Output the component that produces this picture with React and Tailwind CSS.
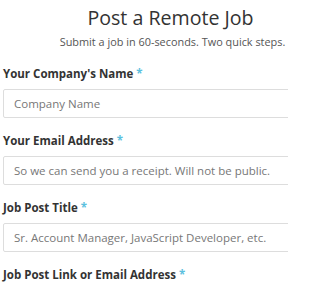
import React from 'react'

const fields = [
    { label: "Your Company's Name", placeholder: 'Company Name' },
    { label: 'Your Email Address', placeholder: 'So we can send you a receipt. Will not be public.' },
    { label: 'Job Post Title', placeholder: 'Sr. Account Manager, JavaScript Developer, etc.' },
    { label: 'Job Post Link or Email Address', placeholder: '' },
];

const App = () => {
    return (
        <div className="w-[288px] h-[288px] overflow-hidden bg-white" style={{ fontFamily: '"Open Sans", sans-serif' }}>
            <div className="w-[338px] pl-[3px]">
                <div className="text-center pt-[4px]">
                    <h1 className="text-[19.6px] leading-[28px] text-[#333] font-normal">Post a Remote Job</h1>
                    <p className="text-[10.9px] leading-[16px] text-[#555] mt-[2px] pl-[4px]">Submit a job in 60-seconds. Two quick steps.</p>
                </div>
                <form className="mt-[16px]">
                    {fields.map(field => (
                        <div key={field.label} className="mb-[15px]">
                            <label className="block text-[11.5px] leading-[16px] font-bold text-[#333] mb-[7px]">
                                {field.label} <span className="text-[#5bc0de]">*</span>
                            </label>
                            <input
                                type="text"
                                placeholder={field.placeholder}
                                className="block w-full h-[29px] border border-[#ddd] rounded-[2px] px-[10px] text-[11.5px] text-[#555] placeholder:text-[#777] outline-none"
                            />
                        </div>
                    ))}
                </form>
            </div>
        </div>
    )
}

export default App
